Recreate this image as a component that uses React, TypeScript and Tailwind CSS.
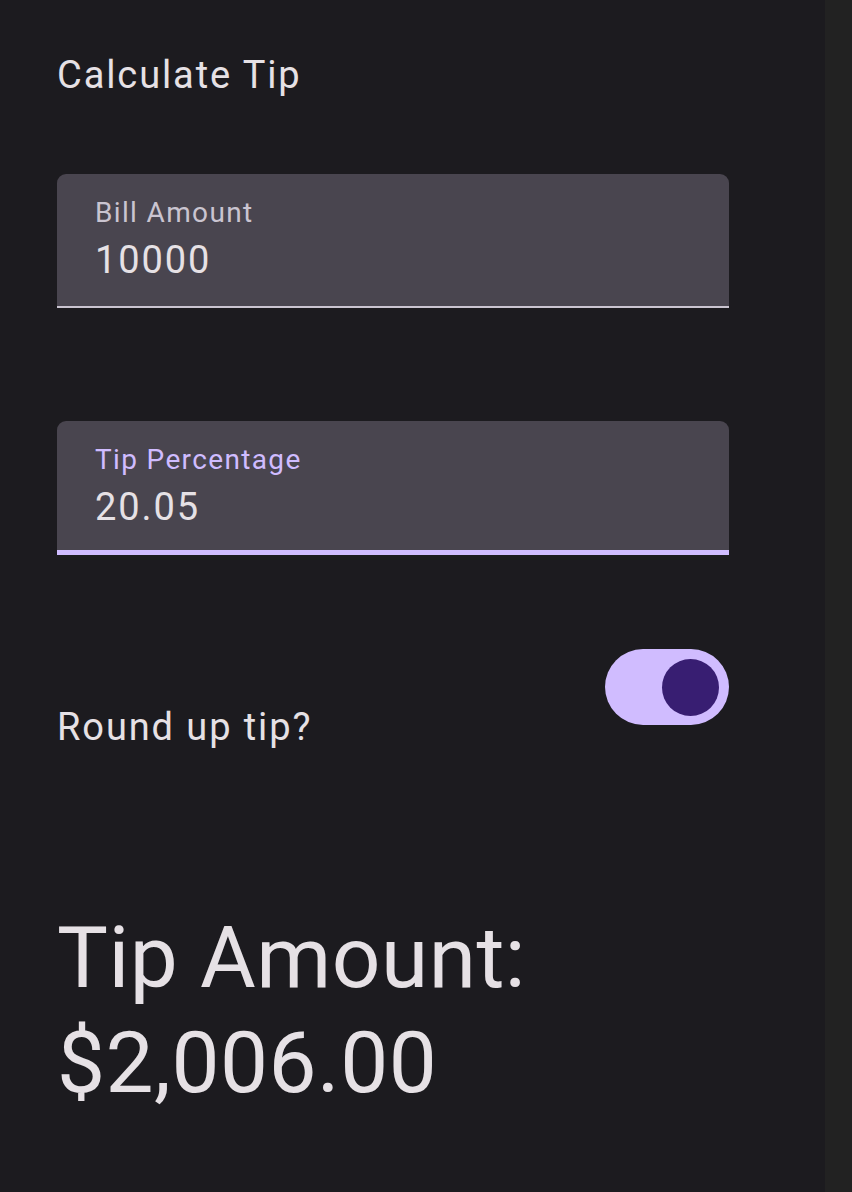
import { useState } from 'react';

function TipField({
  label,
  value,
  focused,
}: {
  label: string;
  value: string;
  focused?: boolean;
}) {
  return (
    <div
      className={`w-[672px] h-[134px] bg-[#49454f] rounded-t-[9px] px-[38px] pt-[25px] ${
        focused ? 'border-b-[5px] border-[#d0bcff]' : 'border-b-2 border-[#cac4d0]'
      }`}
    >
      <p
        className={`text-[28px] leading-[28px] tracking-[1.35px] ${
          focused ? 'text-[#d0bcff]' : 'text-[#cac4d0]'
        }`}
      >
        {label}
      </p>
      <p className="mt-[14px] text-[38px] leading-[38px] tracking-[1.9px] text-[#e6e1e5]">{value}</p>
    </div>
  );
}

export default function App() {
  const [roundUp, setRoundUp] = useState(true);

  return (
    <div className="min-h-screen flex bg-[#1c1b1f] font-[Roboto,sans-serif]">
      <main className="flex-1 pl-[57px] pt-[56px]">
        <h1 className="text-[38px] leading-[38px] tracking-[1.9px] text-[#e6e1e5]">Calculate Tip</h1>

        <div className="mt-[80px]">
          <TipField label="Bill Amount" value="10000" />
        </div>

        <div className="mt-[113px]">
          <TipField label="Tip Percentage" value="20.05" focused />
        </div>

        <div className="mt-[94px] w-[672px] flex justify-between items-start">
          <p className="mt-[59px] text-[38px] leading-[38px] tracking-[1.9px] text-[#e6e1e5]">
            Round up tip?
          </p>
          <button
            onClick={() => setRoundUp(!roundUp)}
            className={`w-[124px] h-[76px] rounded-full flex items-center ${
              roundUp ? 'bg-[#d0bcff] justify-end' : 'bg-[#36343b] justify-start'
            }`}
          >
            <span
              className={`block w-[57px] h-[57px] rounded-full ${
                roundUp ? 'bg-[#381e72] mr-[10px]' : 'bg-[#938f99] ml-[10px]'
              }`}
            />
          </button>
        </div>

        <h2 className="mt-[160px] text-[85.5px] leading-[105px] tracking-[0.5px] text-[#e6e1e5]">
          Tip Amount:
          <br />
          $2,006.00
        </h2>
      </main>
      <div className="w-[27px] bg-[#222222]" />
    </div>
  );
}
